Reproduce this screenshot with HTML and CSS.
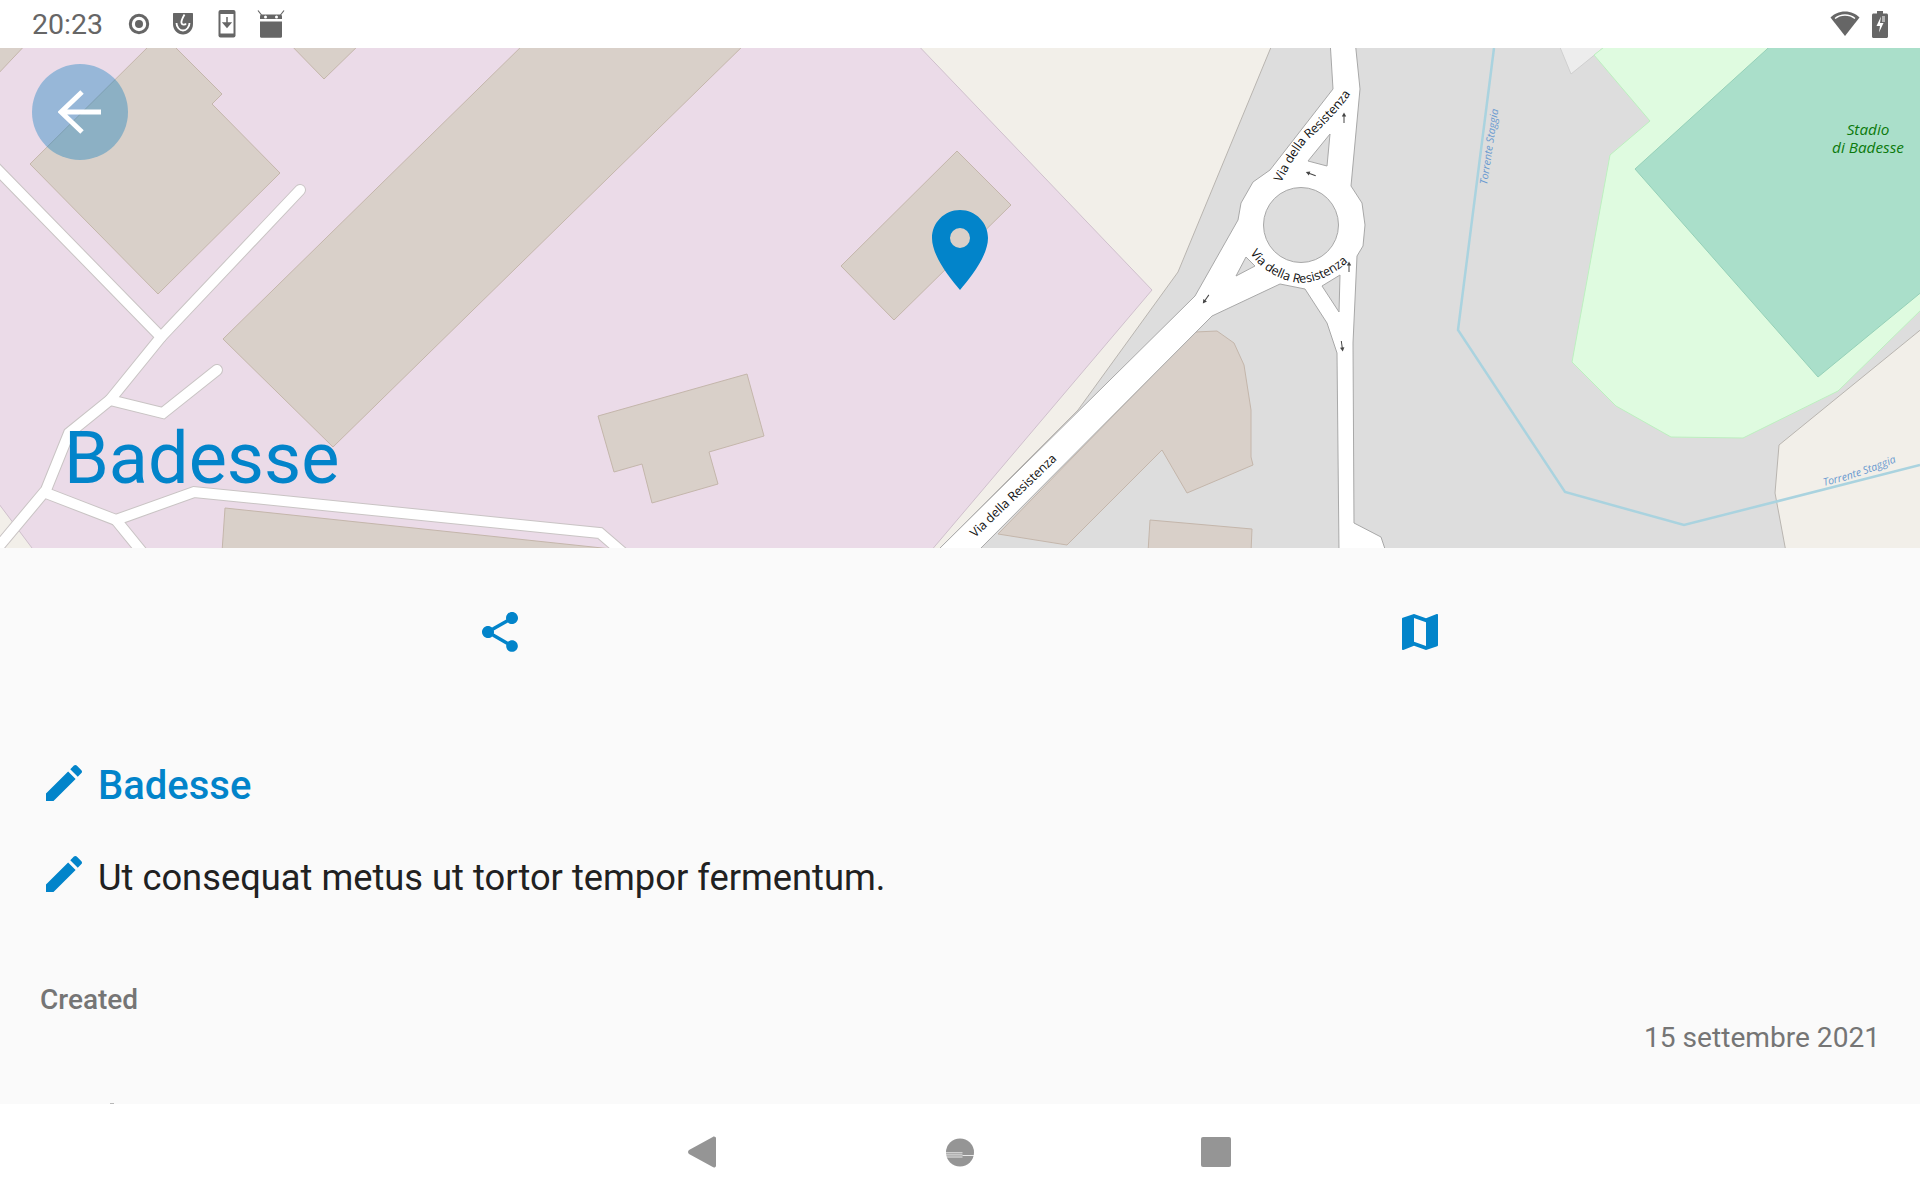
FILE: index.html
```html
<!DOCTYPE html>
<html lang="it">
<head>
<meta charset="utf-8">
<title>Badesse</title>
<link rel="stylesheet" href="styles.css">
</head>
<body>
<div class="screen">
  <header class="status-bar">
    <div class="status-left">
      <span class="clock">20:23</span>
      <svg class="st-icon" width="22" height="24" viewBox="0 0 22 24"><circle cx="11" cy="12" r="8.7" fill="none" stroke="#666" stroke-width="3"/><circle cx="11" cy="12" r="4" fill="#666"/></svg>
      <svg class="st-icon" width="22" height="24" viewBox="0 0 22 24"><path d="M2 1h18c.6 0 1 .4 1 1v10c0 6-4.500 10.500-10 10.500S1 18 1 12V2c0-.6.4-1 1-1z" fill="#666"/><path d="M4.500 11c0 4 3 7.500 6.500 7.500s6.500-3.500 6.500-7.500" fill="none" stroke="#fff" stroke-width="1.800"/><path d="M12.500 2.500C10.500 6 9 9 9.500 11c.5 2 3.500 2.200 4.500.5" fill="none" stroke="#fff" stroke-width="1.800"/></svg>
      <svg class="st-icon" width="18" height="28" viewBox="0 0 18 28"><rect x="0.500" y="0" width="17" height="27.500" rx="2" fill="#666"/><rect x="2.500" y="4" width="13" height="19.500" fill="#fff"/><path d="M9 7v9M5.500 13l3.500 4 3.500-4z" fill="#666" stroke="#666" stroke-width="1.500"/></svg>
      <svg class="st-icon" width="28" height="28" viewBox="0 0 28 28"><path d="M3 9V6.500C3 5 4 4.500 5 4.500h18c1 0 2 .5 2 2V9z" fill="#666"/><path d="M4.500 5L1 0.500M23.500 5L27 0.500" stroke="#666" stroke-width="1.200"/><circle cx="8.500" cy="7" r="1.500" fill="#fff"/><circle cx="19.500" cy="7" r="1.500" fill="#fff"/><path d="M3 11.500h22V26.500c0 .8-.6 1.200-1.200 1.200H4.200c-.6 0-1.200-.4-1.200-1.200z" fill="#666"/></svg>
    </div>
    <div class="status-right">
      <svg width="30" height="26" viewBox="0 0 30 26"><path d="M15 .5C9 .5 4 3 .5 6.500L15 25 29.500 6.500C26 3 21 .5 15 .5z" fill="#666"/><path d="M5 7.500C8 5 11.500 4 15 4s7 1 10 3.500" fill="none" stroke="#fff" stroke-width="1.300"/></svg>
      <svg width="16" height="27" viewBox="0 0 16 27"><path d="M5 0h6v2.500h3.500c.8 0 1.500.6 1.500 1.500v21.500c0 .8-.7 1.500-1.500 1.500h-13C.7 27 0 26.300 0 25.500V4c0-.9.7-1.500 1.500-1.500H5z" fill="#666"/><path d="M9 5.500L4.500 15H8l-1 6.500L11.500 12H8z" fill="#fff"/><rect x="10" y="5" width="3" height="6" fill="#fff" opacity="0.500"/></svg>
    </div>
  </header>

  <section class="map">
    <svg class="map-art" width="1920" height="500" viewBox="0 48 1920 500">
      <defs>
        <path id="lbl-sw" d="M975,538 L1061,456"/>
        <path id="lbl-ne" d="M1281,183 Q1300,146 1312,136 Q1335,116 1353,91"/>
        <path id="lbl-s" d="M1250,253 Q1266,277 1298,283 Q1325,283 1350,260"/>
        <path id="lbl-riv1" d="M1487,185 L1498,112"/>
        <path id="lbl-riv2" d="M1824,486 Q1858,478 1894,463"/>
        <g id="oneway"><path d="M0,5 L0,-3" class="ow-line"/><path d="M-2.200,-1.500 L0,-5.500 L2.200,-1.500z" class="ow-head"/></g>
      </defs>
      <rect class="m-grey" x="0" y="48" width="1920" height="500"/>
      <polygon class="m-beige" points="913,40 1274,40 1178,272 1078,410 936,552 -4,552 -4,40"/>
      <polygon class="m-beige" points="1924,327 1779,445 1775,493 1786,552 1924,552"/>
      <polygon class="m-pale" points="1557,40 1571,74 1613,40"/>
      <polygon class="m-lawn" points="1594,55 1613,40 1924,40 1924,307 1838,391 1743,438 1671,437 1616,406 1572,362 1610,155 1650,121"/>
      <polygon class="m-pitch" points="1777,40 1924,40 1924,290 1818,377 1635,169"/>
      <polygon class="m-retail" points="-4,40 913,40 1152,290 930,552 35,552 -4,500"/>

      <g class="m-build">
        <polygon points="-4,40 30,40 -4,76"/>
        <polygon points="155,40 168,40 222,94 212,104 280,173 158,294 30,164"/>
        <polygon points="286,40 364,40 324,79"/>
        <polygon points="528,40 749,40 333,447 223,339"/>
        <polygon points="957,151 1011,205 894,320 841,266"/>
        <polygon points="598,416 747,374 764,436 709,452 718,484 652,503 642,464 614,472"/>
        <polygon points="225,508 640,552 222,552"/>
        <polygon points="1195,332 1217,331 1234,343 1244,365 1251,410 1251,457 1253,465 1187,493 1162,450 1067,545 998,534"/>
        <polygon points="1150,520 1252,529 1251,552 1148,552"/>
      </g>

      <g class="rd-case">
        <polyline points="-6,166 161,337"/>
        <polyline points="300,190 161,337 110,400 69,433 46,490 0,545"/>
        <polyline points="110,400 163,413 217,370"/>
        <polyline points="46,493 116,520 194,492 600,533 622,552"/>
        <polyline points="116,520 142,552"/>
      </g>
      <g class="rd-fill">
        <polyline points="-6,166 161,337"/>
        <polyline points="300,190 161,337 110,400 69,433 46,490 0,545"/>
        <polyline points="110,400 163,413 217,370"/>
        <polyline points="46,493 116,520 194,492 600,533 622,552"/>
        <polyline points="116,520 142,552"/>
      </g>

      <polyline class="river" points="1494,48 1458,330 1565,492 1684,525 1920,465"/>

      <polygon class="m-road" points="1330,40 1355,40 1360,89 1351,186 1362,203 1365,225 1363,246 1357,256 1353,343 1354,523 1381,537 1386,552 1339,552 1337,353 1327,323 1305,289 1280,284 1212,316 977,552 936,552 1195,296 1238,220 1241,203 1253,182 1270,170 1333,89"/>
      <circle class="m-island" cx="1301" cy="225" r="37.500"/>
      <polygon class="m-island" points="1330,134 1327,166 1308,161"/>
      <polygon class="m-island" points="1246,257 1255,266 1236,276"/>
      <polygon class="m-island" points="1322,286 1340,275 1339,312"/>

      <use href="#oneway" transform="translate(1344,118)"/>
      <use href="#oneway" transform="translate(1311,174) rotate(-70)"/>
      <use href="#oneway" transform="translate(1349,267)"/>
      <use href="#oneway" transform="translate(1206,299) rotate(-145)"/>
      <use href="#oneway" transform="translate(1342,346) rotate(172)"/>

      <text class="t-road"><textPath href="#lbl-sw">Via della Resistenza</textPath></text>
      <text class="t-road"><textPath href="#lbl-ne">Via della Resistenza</textPath></text>
      <text class="t-road"><textPath href="#lbl-s">Via della Resistenza</textPath></text>
      <text class="t-river"><textPath href="#lbl-riv1">Torrente Staggia</textPath></text>
      <text class="t-river"><textPath href="#lbl-riv2">Torrente Staggia</textPath></text>
      <text class="t-park" x="1868" y="135">Stadio</text>
      <text class="t-park" x="1868" y="153">di Badesse</text>

      <path class="pin" fill-rule="evenodd" d="M960,210 C944,210 932,223 932,238 C932,256 950,278 960,290 C970,278 988,256 988,238 C988,223 976,210 960,210z M960,228 a10,10 0 1 1 0,20 a10,10 0 1 1 0,-20z"/>
    </svg>
    <button class="back-btn" type="button" aria-label="Indietro">
      <svg width="44" height="44" viewBox="0 0 44 44"><path d="M43 22H3M24 2L3 22l21 20" fill="none" stroke="#fff" stroke-width="5"/></svg>
    </button>
    <h1 class="map-title">Badesse</h1>
  </section>

  <main class="content">
    <div class="actions">
      <svg class="icon" viewBox="0 0 24 24"><path d="M18 16.080c-.76 0-1.440.3-1.960.77L8.910 12.700c.05-.23.09-.46.09-.7s-.04-.47-.09-.7l7.050-4.110c.54.5 1.250.81 2.040.81 1.660 0 3-1.340 3-3s-1.340-3-3-3-3 1.340-3 3c0 .24.04.47.09.7L8.040 9.810C7.500 9.310 6.790 9 6 9c-1.660 0-3 1.340-3 3s1.340 3 3 3c.79 0 1.500-.31 2.040-.81l7.120 4.160c-.05.21-.08.43-.08.65 0 1.610 1.310 2.920 2.920 2.920 1.610 0 2.920-1.310 2.920-2.920s-1.310-2.920-2.920-2.920z"/></svg>
      <svg class="icon" viewBox="0 0 24 24"><path d="M20.500 3l-.16.03L15 5.100 9 3 3.360 4.900c-.21.07-.36.25-.36.48V20.500c0 .28.22.5.5.5l.16-.03L9 18.900l6 2.100 5.640-1.900c.21-.07.36-.25.36-.48V3.500c0-.28-.22-.5-.5-.5zM15 19l-6-2.110V5l6 2.110V19z"/></svg>
    </div>
    <div class="field field-name">
      <svg class="icon" viewBox="0 0 24 24"><path d="M3 17.250V21h3.750L17.810 9.940l-3.750-3.750L3 17.250zM20.710 7.040c.39-.39.39-1.020 0-1.410l-2.340-2.340c-.39-.39-1.020-.39-1.410 0l-1.830 1.830 3.750 3.750 1.830-1.830z"/></svg>
      <span class="name">Badesse</span>
    </div>
    <div class="field field-desc">
      <svg class="icon" viewBox="0 0 24 24"><path d="M3 17.250V21h3.750L17.810 9.940l-3.750-3.750L3 17.250zM20.710 7.040c.39-.39.39-1.020 0-1.410l-2.340-2.340c-.39-.39-1.020-.39-1.410 0l-1.830 1.830 3.750 3.750 1.830-1.830z"/></svg>
      <span class="desc">Ut consequat metus ut tortor tempor fermentum.</span>
    </div>
    <div class="meta-label">Created</div>
    <div class="meta-value">15 settembre 2021</div>
    <div class="next-speck"></div>
  </main>

  <footer class="nav-bar">
    <svg width="28" height="32" viewBox="0 0 28 32"><path d="M26 .5c1 0 2 .7 2 1.800v27.400c0 1.100-1 1.800-2 1.800-.5 0-.9-.2-1.200-.4L1 18c-1.300-.9-1.300-3.100 0-4L24.800 .9c.3-.2.7-.4 1.200-.4z" fill="#959595"/></svg>
    <svg class="nav-home" width="28" height="29" viewBox="0 0 28 29"><circle cx="14" cy="14.500" r="14" fill="#959595"/><path d="M0 14.800h16.500M0 16.900h16.500M0 19h16.500M16.500 17.500H28" stroke="#fff" stroke-width="0.800"/></svg>
    <div class="nav-square"></div>
  </footer>
</div>
</body>
</html>
```

FILE: styles.css
```css
* { box-sizing: border-box; }
html, body { margin: 0; padding: 0; }
body { width: 1920px; height: 1200px; overflow: hidden; font-family: Roboto, "Liberation Sans", sans-serif; background: #fff; }
.screen { width: 1920px; height: 1200px; display: flex; flex-direction: column; }

.status-bar { height: 48px; flex: none; background: #fff; display: flex; justify-content: space-between; align-items: center; padding: 0 32px; }
.status-left { display: flex; align-items: center; }
.clock { font-size: 28.500px; color: #666; width: 96px; }
.status-left .st-icon { margin-right: 22px; display: block; }
.status-left .st-icon:nth-child(3) { margin-right: 24px; }
.status-left .st-icon:nth-child(4) { margin-right: 21px; }
.status-right { display: flex; align-items: center; gap: 12px; }
.status-right svg { display: block; }

.map { height: 500px; flex: none; position: relative; overflow: hidden; }
.map-art { display: block; }
.m-grey { fill: #dddddd; }
.m-beige { fill: #f2efe9; stroke: #b9b5b0; stroke-width: 1; }
.m-pale { fill: #ededed; stroke: #cfcfcf; stroke-width: 1; }
.m-lawn { fill: #dffbe0; stroke: #bdf0c0; stroke-width: 1; }
.m-pitch { fill: #aadfca; stroke: #95d0b8; stroke-width: 1; }
.m-retail { fill: #ebdbe8; stroke: #cfc0cc; stroke-width: 1; }
.m-build polygon { fill: #d9d0c9; stroke: #c4b6ab; stroke-width: 1; }
.rd-case polyline { fill: none; stroke: #c9c4c4; stroke-width: 12; stroke-linecap: round; stroke-linejoin: miter; }
.rd-fill polyline { fill: none; stroke: #fff; stroke-width: 10; stroke-linecap: round; stroke-linejoin: miter; }
.river { fill: none; stroke: #aad3df; stroke-width: 2.500; }
.m-road { fill: #fff; stroke: #a8a8a8; stroke-width: 1; }
.m-island { fill: #dddddd; stroke: #a8a8a8; stroke-width: 1; }
.ow-line { fill: none; stroke: #444; stroke-width: 1; }
.ow-head { fill: #444; }
.t-road { font-family: "Open Sans", sans-serif; font-size: 12.500px; fill: #111; }
.t-river { font-family: "Open Sans", sans-serif; font-style: italic; font-size: 10.500px; fill: #6a9ad0; }
.t-park { font-family: "Open Sans", sans-serif; font-style: italic; font-size: 15.300px; fill: #0c7a0c; text-anchor: middle; }
.pin { fill: #0284ca; }

.back-btn { position: absolute; left: 32px; top: 16px; width: 96px; height: 96px; border: 0; padding: 0; border-radius: 50%; background: rgba(2, 119, 189, 0.36); display: flex; align-items: center; justify-content: center; }
.map-title { position: absolute; left: 64px; top: 369px; margin: 0; font-size: 72px; line-height: 84px; font-weight: 400; color: #0284ca; }

.content { flex: 1; background: #fafafa; overflow: hidden; padding: 0 40px; }
.icon { width: 48px; height: 48px; display: block; flex: none; fill: #0284ca; }
.actions { display: flex; justify-content: space-around; padding-top: 60px; height: 108px; margin-bottom: 103px; }
.field { display: flex; align-items: center; height: 48px; gap: 10px; }
.field-desc { margin-top: 43px; }
.name { font-size: 40px; font-weight: 500; color: #0284ca; padding-top: 4px; }
.desc { font-size: 36.300px; color: #212121; padding-top: 7px; }
.meta-label { margin-top: 85px; font-size: 28px; line-height: 34px; font-weight: 500; color: #757575; }
.meta-value { margin-top: 4px; font-size: 28.100px; line-height: 34px; color: #757575; text-align: right; }
.next-speck { width: 4px; height: 1px; margin: 48px 0 0 70px; background: #b8b8b8; }

.nav-bar { height: 96px; flex: none; background: #fff; display: flex; align-items: center; justify-content: center; padding-right: 2px; }
.nav-bar svg { display: block; }
.nav-home { margin: 0 227px 0 230px; }
.nav-square { width: 30px; height: 30px; border-radius: 2px; background: #959595; }
```
